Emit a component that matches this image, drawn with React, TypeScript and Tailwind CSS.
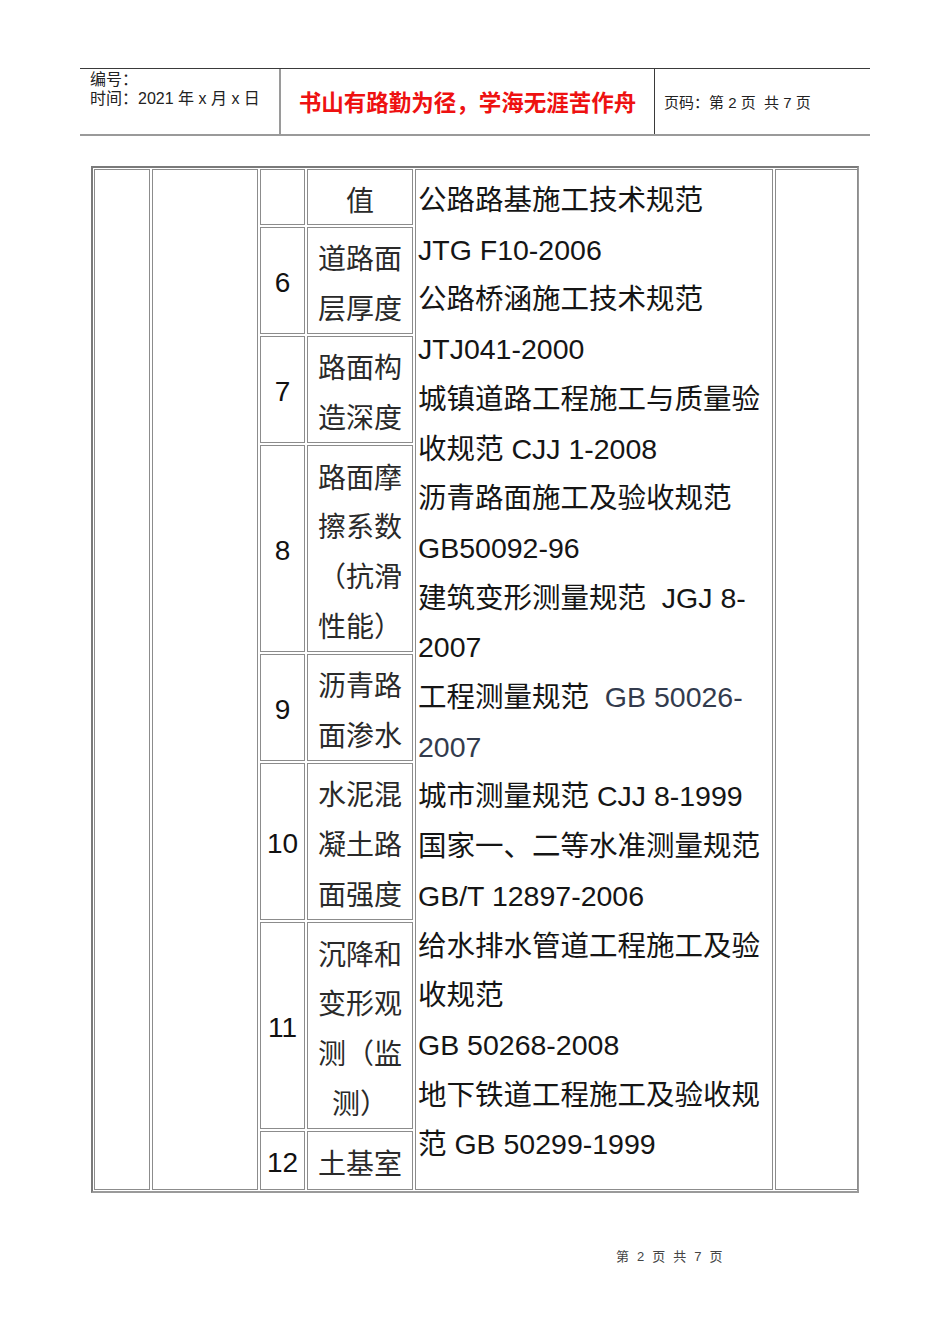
import React from "react";

const F = "font-['Liberation_Sans','Noto_Sans_CJK_SC',sans-serif]";

const lines: { t: React.ReactNode }[] = [
  { t: "公路路基施工技术规范" },
  { t: "JTG F10-2006" },
  { t: "公路桥涵施工技术规范" },
  { t: "JTJ041-2000" },
  { t: "城镇道路工程施工与质量验" },
  { t: "收规范 CJJ 1-2008" },
  { t: "沥青路面施工及验收规范" },
  { t: "GB50092-96" },
  { t: "建筑变形测量规范  JGJ 8-" },
  { t: "2007" },
  {
    t: (
      <>
        工程测量规范 <span className="text-[#333b4d]"> GB 50026-</span>
      </>
    ),
  },
  { t: <span className="text-[#333b4d]">2007</span> },
  { t: "城市测量规范 CJJ 8-1999" },
  { t: "国家一、二等水准测量规范" },
  { t: "GB/T 12897-2006" },
  { t: "给水排水管道工程施工及验" },
  { t: "收规范" },
  { t: "GB 50268-2008" },
  { t: "地下铁道工程施工及验收规" },
  { t: "范 GB 50299-1999" },
];

const rows: { n: string; item: string[]; rowClass: string }[] = [
  { n: "", item: ["值"], rowClass: "row-start-1" },
  { n: "6", item: ["道路面", "层厚度"], rowClass: "row-start-2" },
  { n: "7", item: ["路面构", "造深度"], rowClass: "row-start-3" },
  { n: "8", item: ["路面摩", "擦系数", "（抗滑", "性能）"], rowClass: "row-start-4" },
  { n: "9", item: ["沥青路", "面渗水"], rowClass: "row-start-5" },
  { n: "10", item: ["水泥混", "凝土路", "面强度"], rowClass: "row-start-6" },
  { n: "11", item: ["沉降和", "变形观", "测（监", "测）"], rowClass: "row-start-7" },
  { n: "12", item: ["土基室"], rowClass: "row-start-8" },
];

const cell = "border border-[#8c8c8c]";

export default function App() {
  return (
    <div className={`w-[950px] h-[1344px] bg-white ${F} text-black [text-spacing-trim:space-all]`}>
      <div className="pt-[68px]">
        {/* header */}
        <div className="ml-[80px] w-[790px] h-[68px] border-t border-[#3a3a3a] border-b-2 border-b-[#9a9a9a] flex">
          <div className="w-[201px] border-r-2 border-[#9a9a9a] pl-[10px] pt-[1px] text-[16px] leading-[19px] text-[#222]">
            <div>编号：</div>
            <div className="whitespace-nowrap">时间：2021 年 x 月 x 日</div>
          </div>
          <div className="w-[374px] border-r border-[#3a3a3a] flex items-center justify-center pt-[5px]">
            <span className="text-[22.5px] font-bold text-[#ee1111] whitespace-nowrap">
              书山有路勤为径，学海无涯苦作舟
            </span>
          </div>
          <div className="flex-1 flex items-center pl-[9px] pt-[3px] text-[15px] text-[#222] whitespace-pre">
            页码：第 2 页  共 7 页
          </div>
        </div>

        {/* table */}
        <div className="ml-[91px] mt-[30px] w-[768px] border-2 border-[#7a7a7a] border-b-[#9a9a9a] border-r-[#9a9a9a] p-[1px]">
          <div className="grid grid-cols-[56px_106px_45px_106px_358px_83px] grid-rows-[56px_107px_107px_207px_107px_157px_207px_59px] gap-[2px]">
            <div className={`${cell} col-start-1 row-start-1 row-span-8`} />
            <div className={`${cell} col-start-2 row-start-1 row-span-8`} />
            {rows.map((r, i) => (
              <React.Fragment key={i}>
                <div
                  className={`${cell} col-start-3 ${r.rowClass} flex items-center justify-center pt-[5px] text-[28px] text-[#111]`}
                >
                  {r.n}
                </div>
                <div
                  className={`${cell} col-start-4 ${r.rowClass} flex flex-col items-center justify-center pt-[9px] text-[28px] leading-[49.7px] text-[#2a2a2a]`}
                >
                  {r.item.map((s, j) => (
                    <div key={j} className="whitespace-nowrap">
                      {s}
                    </div>
                  ))}
                </div>
              </React.Fragment>
            ))}
            <div className={`${cell} col-start-5 row-start-1 row-span-8 pl-[2px] pt-[6px] text-[28.5px] leading-[49.7px] text-[#151515]`}>
              {lines.map((l, i) => (
                <div key={i} className="whitespace-pre">
                  {l.t}
                </div>
              ))}
            </div>
            <div className={`${cell} col-start-6 row-start-1 row-span-8`} />
          </div>
        </div>

        {/* footer */}
        <div className="ml-[616px] mt-[56px] flex gap-[8px] text-[13px] leading-[16px] text-[#444]">
          <span>第</span>
          <span>2</span>
          <span>页</span>
          <span>共</span>
          <span>7</span>
          <span>页</span>
        </div>
      </div>
    </div>
  );
}
